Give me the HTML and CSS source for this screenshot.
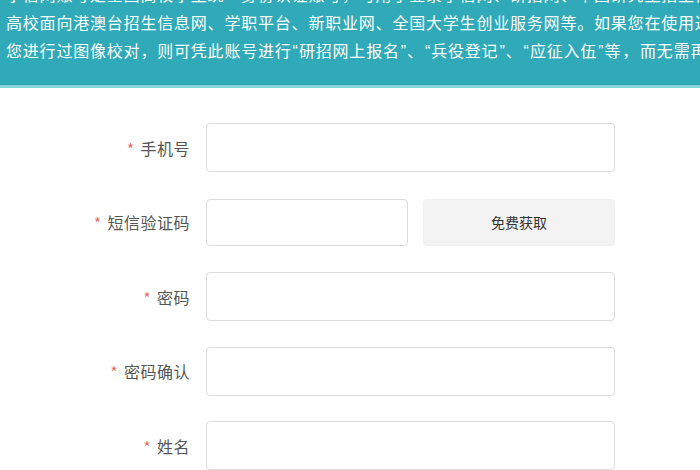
FILE: index.html
```html
<!DOCTYPE html>
<html lang="zh-CN">
<head>
<meta charset="utf-8">
<title>注册</title>
<link rel="stylesheet" href="styles.css">
</head>
<body>
<div class="notice">
  <p class="line">学信网账号是全国高校学生统一身份认证账号，可用于登录学信网、研招网、中国研究生招生信息网、阳光高考、全国征兵网、全国</p>
  <p class="line">高校面向港澳台招生信息网、学职平台、新职业网、全国大学生创业服务网等。如果您在使用过程中</p>
  <p class="line">您进行过图像校对，则可凭此账号进行<span class="q">“</span>研招网上报名<span class="q">”</span>、<span class="q">“</span>兵役登记<span class="q">”</span>、<span class="q">“</span>应征入伍<span class="q">”</span>等<span class="comma">，</span>而无需再次注册</p>
</div>
<form class="form">
  <div class="row">
    <label class="label"><span class="req">*</span>手机号</label>
    <input class="input" type="text">
  </div>
  <div class="row">
    <label class="label"><span class="req">*</span>短信验证码</label>
    <div class="code">
      <input class="input short" type="text">
      <button class="btn" type="button">免费获取</button>
    </div>
  </div>
  <div class="row">
    <label class="label"><span class="req">*</span>密码</label>
    <input class="input" type="password">
  </div>
  <div class="row">
    <label class="label"><span class="req">*</span>密码确认</label>
    <input class="input" type="password">
  </div>
  <div class="row">
    <label class="label"><span class="req">*</span>姓名</label>
    <input class="input" type="text">
  </div>
</form>
</body>
</html>
```
FILE: styles.css
```css
html, body {
  margin: 0;
  padding: 0;
  background: #fff;
  overflow: hidden;
}
body {
  font-family: "Microsoft YaHei", "Noto Sans CJK SC", "Noto Sans", sans-serif;
  width: 700px;
  height: 470px;
}
.notice {
  margin-top: -20px;
  background: #30aab8;
  padding: 0 0 19px 6px;
  border-bottom: 3px solid #88d6dc;
  box-shadow: inset 0 -1px 0 #2a9eab;
  overflow: hidden;
}
.line {
  margin: 0;
  color: #fff;
  font-size: 16px;
  letter-spacing: 0.8px;
  line-height: 28px;
  white-space: nowrap;
}
.q {
  font-family: "Liberation Sans", sans-serif;
  letter-spacing: 0;
  margin: 0 1px;
}
.comma {
  margin: 0 1px;
}
.form {
  margin: 35px 0 0 0;
  display: flex;
  flex-direction: column;
  gap: 25.6px;
}
.row {
  display: flex;
  align-items: center;
  height: 49px;
}
.label {
  width: 206px;
  flex-shrink: 0;
  padding-right: 16px;
  box-sizing: border-box;
  text-align: right;
  font-size: 16px;
  letter-spacing: 0.5px;
  color: #555;
}
.req {
  color: #e86a6a;
  margin-right: 6px;
  font-size: 15px;
}
.input {
  width: 409px;
  height: 49px;
  box-sizing: border-box;
  border: 1.5px solid #dcdcdc;
  border-radius: 4px;
  background: #fff;
  margin: 0;
  padding: 0 10px;
  outline: none;
}
.code {
  display: flex;
  gap: 15px;
  height: 47px;
}
.input.short {
  width: 202px;
  height: 47px;
}
.btn {
  width: 192px;
  height: 47px;
  border: 1px solid #f0f0f0;
  border-radius: 4px;
  background: #f3f3f3;
  color: #333;
  font-family: inherit;
  font-size: 14px;
  margin: 0;
  padding: 0;
}
```
